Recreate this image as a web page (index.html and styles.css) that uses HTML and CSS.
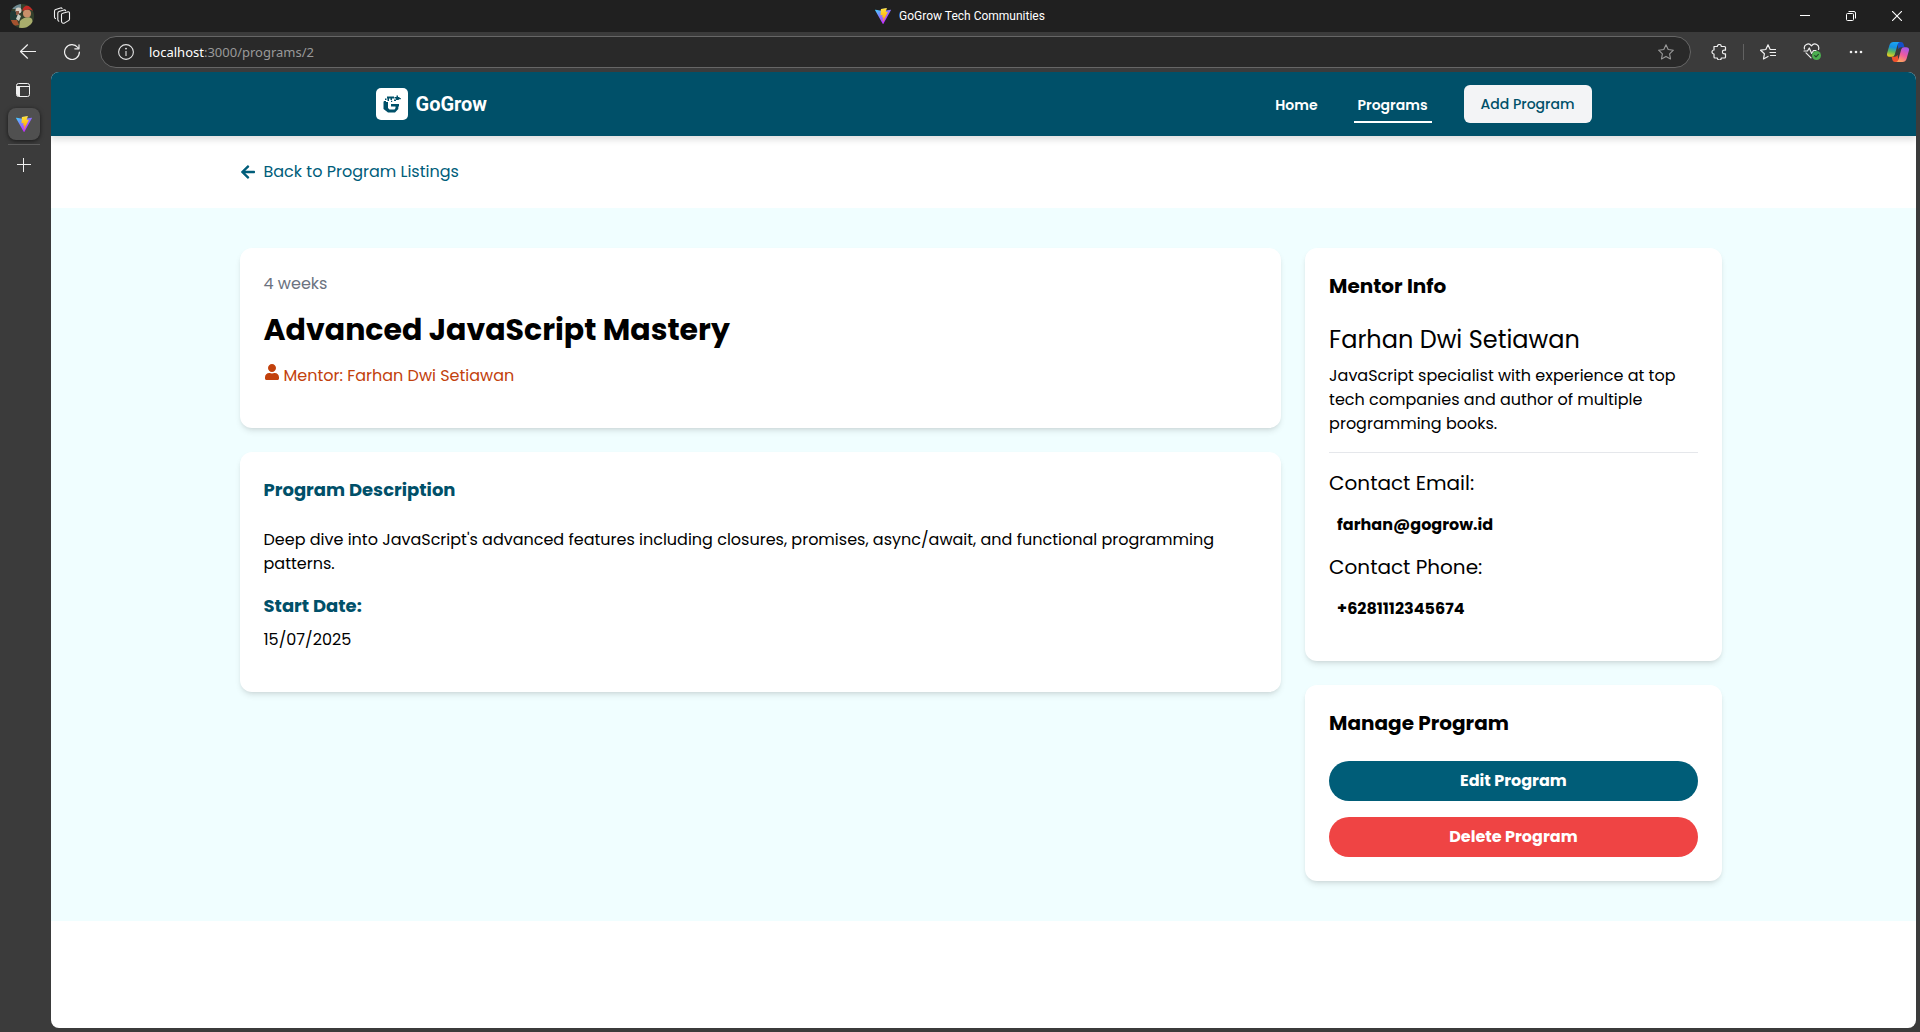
FILE: index.html
```html
<!DOCTYPE html>
<html lang="en">
<head>
<meta charset="utf-8">
<meta name="viewport" content="width=device-width, initial-scale=1">
<title>GoGrow Tech Communities</title>
<link rel="stylesheet" href="styles.css">
</head>
<body>
<svg class="defs" aria-hidden="true">
  <defs>
    <linearGradient id="vite-a" x1="0" y1="0" x2="0.6" y2="0.8"><stop offset="0" stop-color="#41d1ff"/><stop offset="1" stop-color="#bd34fe"/></linearGradient>
    <linearGradient id="vite-b" x1="0.43" y1="0.02" x2="0.5" y2="0.9"><stop offset="0" stop-color="#ffea83"/><stop offset="0.1" stop-color="#ffdd35"/><stop offset="1" stop-color="#ffa800"/></linearGradient>
    <linearGradient id="cp-a" x1="0.5" y1="0" x2="0.3" y2="1"><stop offset="0" stop-color="#1ba4f2"/><stop offset="0.35" stop-color="#1590e0"/><stop offset="0.65" stop-color="#5cb85c"/><stop offset="1" stop-color="#f5cf1c"/></linearGradient>
    <linearGradient id="cp-b" x1="0.7" y1="0" x2="0.3" y2="1"><stop offset="0" stop-color="#a358f0"/><stop offset="0.5" stop-color="#ee5aa0"/><stop offset="1" stop-color="#ffa65c"/></linearGradient>
    <clipPath id="round"><circle cx="12" cy="12" r="12"/></clipPath>
    <symbol id="vite" viewBox="0 0 256 257">
      <path fill="url(#vite-a)" d="M255.153 37.938L134.897 252.976c-2.483 4.44-8.862 4.466-11.382.048L.875 37.958c-2.746-4.814 1.371-10.646 6.827-9.67l120.385 21.517a6.537 6.537 0 0 0 2.322-.004l117.867-21.483c5.438-.991 9.574 4.796 6.877 9.62Z"/>
      <path fill="url(#vite-b)" d="M185.432.063L96.44 17.501a3.268 3.268 0 0 0-2.634 3.014l-5.474 92.456a3.268 3.268 0 0 0 3.997 3.378l24.777-5.718c2.318-.535 4.413 1.507 3.936 3.838l-7.361 36.047c-.495 2.426 1.782 4.5 4.151 3.78l15.304-4.649c2.372-.72 4.652 1.36 4.15 3.788l-11.698 56.621c-.732 3.542 3.979 5.473 5.943 2.437l1.313-2.028l72.516-144.72c1.215-2.423-.88-5.186-3.54-4.672l-25.505 4.922c-2.396.462-4.435-1.77-3.759-4.114l16.646-57.705c.677-2.35-1.37-4.583-3.769-4.113Z"/>
    </symbol>
  </defs>
</svg>

<div class="window">
  <div class="titlebar">
    <div class="titlebar-side">
      <button class="profile" aria-label="Profile">
        <svg width="24" height="24" viewBox="0 0 24 24"><g clip-path="url(#round)"><path fill="#33402c" d="M0 0h24v24H0z"/><path fill="#6f8a92" d="M0 0h11v5H0z"/><path fill="#203b35" d="M0 7h9v9H0z"/><circle cx="8.500" cy="6.500" r="3" fill="#d8d0c4"/><path fill="#8b5a43" d="M6 7h3v4H6z"/><path fill="#c5cdc0" d="M8 10l3 2-2 5-3-2z"/><path fill="#a4522f" d="M1 16h6l2 5-6 1z"/><path fill="#a9ad6c" d="M10 17c3-4 10-5 12-2l2 9H9z"/><circle cx="17" cy="9.500" r="4" fill="#c9906a"/><path fill="#c22b26" d="M12.500 7c0-7 10-7 10.500 0-3-2-7-2-10.500 0z"/></g></svg>
      </button>
      <button class="workspaces" aria-label="Workspaces">
        <svg width="18" height="18" viewBox="0 0 18 18" fill="none" stroke="#f0f0f0" stroke-width="1.100" stroke-linejoin="round" stroke-linecap="round"><path d="M8.500 7.500v6.800q0 1.500 1.400 1.900 1 .3 1.800-.3l3.800-2.300q1-.6 1-1.700V6.200q0-1.500-1.300-1.400L9.800 6.300Q8.500 6.600 8.500 7.500z"/><path d="M5.800 14.200q-1-.5-1-1.600V6.200q0-1.200 1.200-1.600L11 3q1.200-.3 1.600.7"/><path d="M2.500 11.600q-1-.5-1-1.600V4.200Q1.500 3 2.700 2.600L7.500 1q1.200-.3 1.600.6"/></svg>
      </button>
    </div>
    <div class="window-title"><svg width="16" height="16"><use href="#vite"/></svg><span>GoGrow Tech Communities</span></div>
    <div class="titlebar-side controls">
      <button aria-label="Minimize"><svg width="10" height="10" viewBox="0 0 10 10" stroke="#fff"><path d="M0 4.500h10"/></svg></button>
      <button aria-label="Restore"><svg width="10" height="10" viewBox="0 0 10 10" fill="none" stroke="#fff"><rect x=".5" y="2.500" width="7" height="7" rx="1"/><path d="M2.500.5H8q1.500 0 1.500 1.500v5.500"/></svg></button>
      <button aria-label="Close"><svg width="10" height="10" viewBox="0 0 10 10" stroke="#fff" stroke-width="1.100"><path d="M0 0l10 10M10 0L0 10"/></svg></button>
    </div>
  </div>

  <div class="toolbar">
    <div class="tools">
      <button class="tool" aria-label="Back"><svg width="16" height="16" viewBox="0 0 16 16" fill="none" stroke="#f0f0f0" stroke-width="1.200" stroke-linecap="round" stroke-linejoin="round"><path d="M15.500 7.500H.5M7.500.8L.5 7.500l7 6.700"/></svg></button>
      <button class="tool" aria-label="Reload"><svg width="16" height="16" viewBox="0 0 16 16" fill="none" stroke="#f0f0f0" stroke-width="1.200" stroke-linecap="round" stroke-linejoin="round"><path d="M15.400 8A7.400 7.400 0 1 1 13.800 3.500M15 .8v4h-4.200"/></svg></button>
    </div>
    <div class="address">
      <svg width="16" height="16" viewBox="0 0 16 16" fill="none" stroke="#e4e4e4" stroke-width="1.100"><circle cx="8" cy="8" r="7.400"/><path d="M8 7v5"/><circle cx="8" cy="4.600" r=".4" fill="#e4e4e4"/></svg>
      <div class="url"><span class="host">localhost</span>:3000/programs/2</div>
      <button class="star" aria-label="Add to favorites"><svg width="16" height="16" viewBox="0 0 16 16" fill="none" stroke="#9a9a9a" stroke-width="1.100" stroke-linejoin="round"><path d="M8 .8l2.200 4.700 5.200.7-3.800 3.600.9 5.100L8 12.400l-4.500 2.500.9-5.100L.6 6.200l5.200-.7z"/></svg></button>
    </div>
    <div class="tools">
      <button class="tool" aria-label="Extensions"><svg width="16" height="16" viewBox="0 0 16 16" fill="none" stroke="#f0f0f0" stroke-width="1.200" stroke-linejoin="round"><path d="M3 2.500h3.300a2 2 0 0 1 4 0h3.200q1 0 1 1v2.700h-1.300a1.800 1.800 0 0 0 0 3.600h1.300V13q0 1-1 1h-3.200a2 2 0 0 1-4 0H4q-1 0-1-1v-3a2 2 0 0 1 0-4z"/></svg></button>
      <span class="separator"></span>
      <button class="tool" aria-label="Favorites"><svg width="16" height="16" viewBox="0 0 16 16" fill="none" stroke="#f0f0f0" stroke-width="1.200" stroke-linejoin="round" stroke-linecap="round"><path d="M8 12.400l-4.500 2.500.9-5.100L.6 6.200l5.200-.7L8 .8l2.200 4.700h5.300M10 8.500h5.500M10.500 11.500h5"/></svg></button>
      <button class="tool" aria-label="Browser essentials"><svg width="18" height="18" viewBox="0 0 18 18" fill="none" stroke="#f0f0f0" stroke-width="1.200" stroke-linejoin="round" stroke-linecap="round"><path d="M1.500 6C.3 2 5.500-1 8.500 2.800 11.500-1 17 2 15.500 6.500M3 9.800l5 5M1 8h3.500L6.300 5l2.400 5.500L10.500 7.500H13"/><circle cx="13.500" cy="12.500" r="4.500" fill="#4caf50" stroke="none"/><path d="M11.700 12.600l1.300 1.300 2.400-2.500" stroke="#24492a"/></svg></button>
      <button class="tool" aria-label="Settings and more"><svg width="14" height="4" viewBox="0 0 14 4" fill="#f0f0f0"><circle cx="2" cy="2" r="1.300"/><circle cx="7" cy="2" r="1.300"/><circle cx="12" cy="2" r="1.300"/></svg></button>
      <button class="tool copilot" aria-label="Copilot"><svg width="22" height="20" viewBox="0 0 22 20"><path fill="#1450c8" d="M10 0h4q2 0 2.600 2l.9 3.200h-3.400q-2 0-2.600 2z"/><path fill="#f0502d" d="M12 20H8q-2 0-2.600-2l-.8-3.200h3.200q2 0 2.600-2z"/><path fill="url(#cp-a)" d="M6.500 0h6.300q-1.600.4-2.200 2.500L7.700 12.700q-.6 2.100-2.800 2.100H2.700Q-.8 14.800.2 11L2.500 3Q3.500 0 6.500 0z"/><path fill="url(#cp-b)" d="M15.500 20H9.200q1.600-.4 2.200-2.500l2.900-10.200q.6-2.100 2.800-2.100h2.200q3.500 0 2.500 3.800L19.500 17q-1 3-4 3z"/></svg></button>
    </div>
  </div>

  <div class="workspace">
    <aside class="tabs">
      <button class="tab-action" aria-label="Tab actions"><svg width="14" height="14" viewBox="0 0 14 14" fill="none" stroke="#f0f0f0"><rect x=".5" y=".5" width="13" height="13" rx="2"/><path d="M1 3.500h12"/><path d="M1 4h3v9H2q-1 0-1-1z" fill="#f0f0f0" stroke="none"/></svg></button>
      <button class="tab-active" aria-label="GoGrow Tech Communities"><svg width="16" height="16"><use href="#vite"/></svg></button>
      <button class="tab-action new-tab" aria-label="New tab"><svg width="14" height="14" viewBox="0 0 14 14" stroke="#f0f0f0"><path d="M0 6.500h14M6.500 0v14"/></svg></button>
    </aside>

    <div class="page">
      <header class="site-header">
        <div class="header-inner">
          <a class="brand" href="#">
            <svg width="32" height="32" viewBox="0 0 32 32"><rect width="32" height="32" rx="5" fill="#fff"/><path fill="#005069" d="M8 13h2v1h2v6l1.500 1.500h5L19.500 20v-1.500H15V16h8v2.500h-.7V21L19 24.500h-7L7.500 21v-7zM9 10.500h1.500V12H9zM11 8.500h7v2h-2V12h-1.500v-1.500H13V13h-1.500v-2.500H11zM18.500 9h2V7.500H22V9h1.500v1h1.300v1.200h-2V12H20v1h-2v-1.500h2v-1h-1.500zM15 12.800h1.200V14H15z"/></svg>
            <span>GoGrow</span>
          </a>
          <nav class="nav">
            <a class="nav-link" href="#">Home</a>
            <a class="nav-link current" href="#">Programs</a>
            <a class="nav-button" href="#">Add Program</a>
          </nav>
        </div>
      </header>

      <div class="container back">
        <a class="back-link" href="#"><svg width="16" height="16" viewBox="0 0 448 512" fill="currentColor"><path d="M257.500 445.100l-22.200 22.200c-9.400 9.400-24.600 9.400-33.900 0L7 273c-9.400-9.400-9.400-24.600 0-33.900L201.400 44.700c9.400-9.400 24.600-9.400 33.900 0l22.200 22.200c9.500 9.500 9.300 25-.4 34.300L136.600 216H424c13.300 0 24 10.700 24 24v32c0 13.300-10.700 24-24 24H136.600l120.500 114.800c9.800 9.300 10 24.800.4 34.300z"/></svg>Back to Program Listings</a>
      </div>

      <section class="details">
        <div class="container columns">
          <main class="stack">
            <div class="card">
              <p class="duration">4 weeks</p>
              <h1 class="program-title">Advanced JavaScript Mastery</h1>
              <p class="mentor"><svg width="16" height="16" viewBox="0 0 448 512" fill="currentColor"><path d="M224 256c70.700 0 128-57.300 128-128S294.700 0 224 0 96 57.300 96 128s57.300 128 128 128zm89.600 32h-16.700c-22.200 10.200-46.900 16-72.900 16s-50.600-5.800-72.900-16h-16.700C60.200 288 0 348.200 0 422.400V464c0 26.500 21.500 48 48 48h352c26.500 0 48-21.500 48-48v-41.600c0-74.200-60.200-134.400-134.400-134.400z"/></svg>Mentor: Farhan Dwi Setiawan</p>
            </div>
            <div class="card">
              <h3 class="section-title spaced">Program Description</h3>
              <p class="description">Deep dive into JavaScript's advanced features including closures, promises, async/await, and functional programming patterns.</p>
              <h3 class="section-title">Start Date:</h3>
              <p>15/07/2025</p>
            </div>
          </main>
          <aside class="stack">
            <div class="card mentor-card">
              <h3 class="card-title">Mentor Info</h3>
              <h2 class="mentor-name">Farhan Dwi Setiawan</h2>
              <p>JavaScript specialist with experience at top tech companies and author of multiple programming books.</p>
              <hr class="rule">
              <h3 class="contact-label">Contact Email:</h3>
              <p class="contact">farhan@gogrow.id</p>
              <h3 class="contact-label">Contact Phone:</h3>
              <p class="contact">+6281112345674</p>
            </div>
            <div class="card manage">
              <h3 class="card-title">Manage Program</h3>
              <div class="actions">
                <button class="action edit">Edit Program</button>
                <button class="action delete">Delete Program</button>
              </div>
            </div>
          </aside>
        </div>
      </section>
    </div>
  </div>
</div>
</body>
</html>
```
FILE: styles.css
```css
*, *::before, *::after { box-sizing: border-box; }
body, h1, h2, h3, p { margin: 0; }
body { font: 400 16px/24px Poppins, Inter, sans-serif; color: #000; background: #3b3b3b; }
button { padding: 0; border: 0; background: none; font: inherit; color: inherit; cursor: pointer; }
a { color: inherit; text-decoration: none; }
svg { display: block; flex: none; }
.defs { position: absolute; width: 0; height: 0; }

/* Browser frame */
.window { display: flex; flex-direction: column; min-height: 100vh; }
.titlebar { display: grid; grid-template-columns: 1fr auto 1fr; height: 32px; background: #202020; color: #fff; }
.titlebar-side { display: flex; align-items: center; }
.profile { margin-left: 10px; }
.workspaces { margin-left: 19px; }
.window-title { display: flex; align-items: center; gap: 8px; font: 12px/16px "Segoe UI", Roboto, sans-serif; }
.controls { justify-content: flex-end; }
.controls button { display: grid; place-items: center; width: 46px; height: 32px; }
.toolbar { display: flex; align-items: center; gap: 6px; height: 40px; padding: 0 2px 0 6px; }
.tools { display: flex; align-items: center; }
.tool { display: grid; place-items: center; width: 44px; height: 32px; }
.tool.copilot { width: 40px; }
.separator { width: 1px; height: 16px; margin: 0 2px; background: #626262; }
.address { display: flex; flex: 1; align-items: center; height: 32px; padding: 0 16px 0 17px; border: 1px solid #666; border-radius: 16px; background: #292929; }
.url { flex: 1; margin-left: 15px; font: 13px/20px "Segoe UI", "Noto Sans", sans-serif; color: #999; }
.host { color: #fff; }
.workspace { display: flex; flex: 1; padding: 0 4px 4px 0; }
.tabs { width: 51px; padding: 0 11px 0 8px; }
.tab-action { display: grid; place-items: center; width: 30px; height: 36px; }
.tab-active { display: grid; place-items: center; width: 32px; height: 32px; border-radius: 8px; background: #505050; box-shadow: 0 1px 4px rgba(0, 0, 0, .6); }
.new-tab { width: 32px; height: 40px; margin-top: 4px; border-top: 1px solid #5c5c5c; }

/* Site */
.page { flex: 1; border-radius: 8px; background: #fff; overflow: hidden; }
.site-header { position: relative; background: #005069; color: #fff; box-shadow: 0 4px 6px rgba(0, 0, 0, .12); }
.header-inner { display: flex; align-items: center; justify-content: space-between; max-width: 1280px; height: 64px; margin: 0 auto; padding: 0 32px; }
.brand { display: flex; align-items: center; gap: 8px; font: 700 20px/28px Roboto, sans-serif; }
.nav { display: flex; align-items: center; gap: 32px; font-size: 14px; line-height: 20px; }
.nav-link { padding: 10px 4px 6px; border-bottom: 2px solid transparent; font-weight: 600; }
.nav-link.current { border-color: #fff; }
.nav-button { padding: 9px 17px; border-radius: 6px; background: #f3f4f6; color: #005069; font-weight: 500; }
.container { max-width: 1536px; margin: 0 auto; padding: 0 24px; }
.back { padding-top: 24px; padding-bottom: 24px; }
.back-link { display: inline-flex; align-items: center; gap: 8px; height: 24px; vertical-align: top; color: #005d7a; }
.details { padding: 40px 0; background: #f0feff; }
.columns { display: grid; grid-template-columns: 70% 28%; gap: 24px; align-items: start; }
.stack { display: grid; gap: 24px; }
.card { padding: 24px 24px 40px; border-radius: 12px; background: #fff; box-shadow: 0 4px 6px -1px rgba(0, 0, 0, .1), 0 2px 4px -2px rgba(0, 0, 0, .1); }
.duration { margin-bottom: 16px; color: #6b7280; }
.program-title { margin-bottom: 16px; font-size: 30px; line-height: 36px; }
.mentor { display: flex; gap: 4px; color: #c2410c; }
.section-title { margin-bottom: 8px; font-size: 18px; line-height: 28px; color: #005069; }
.section-title.spaced { margin-bottom: 24px; }
.description { margin-bottom: 16px; }
.card-title { margin-bottom: 24px; font-size: 20px; line-height: 28px; }
.mentor-name { margin-bottom: 8px; font-size: 24px; line-height: 32px; font-weight: 400; }
.rule { height: 1px; margin: 16px 0; border: 0; background: #e5e7eb; }
.contact-label { font-size: 20px; line-height: 28px; font-weight: 400; }
.contact { margin: 8px 0; padding: 8px; font-weight: 700; }
.mentor-card { padding-bottom: 24px; }
.manage { padding-bottom: 24px; }
.actions { display: grid; gap: 16px; }
.action { height: 40px; border-radius: 20px; color: #fff; font-weight: 700; }
.edit { background: #005d78; }
.delete { background: #ef4444; }
```
